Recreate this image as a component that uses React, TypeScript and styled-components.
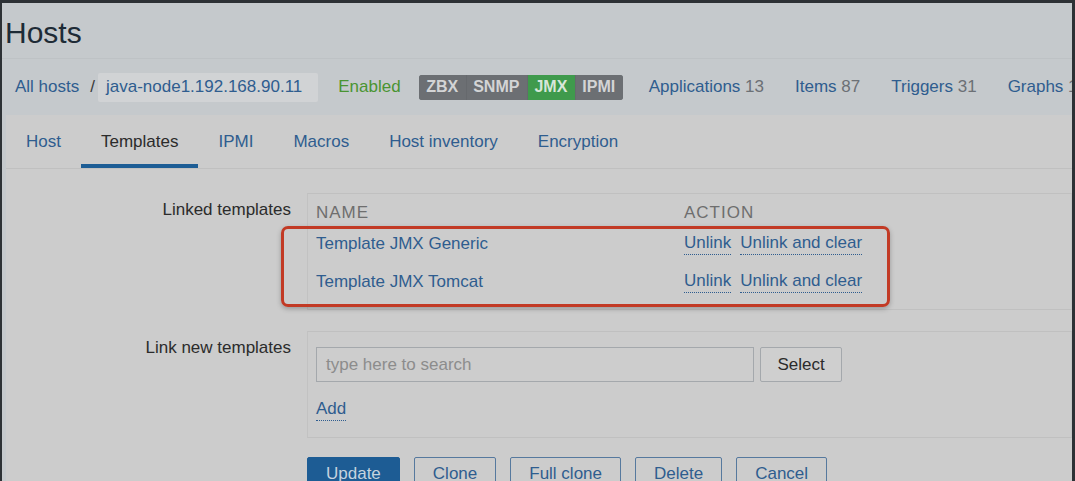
import React from "react";
import styled, { createGlobalStyle } from "styled-components";

const Global = createGlobalStyle`
  html, body { margin: 0; padding: 0; background: #2d3135; }
  body { font-family: "Liberation Sans", Arial, sans-serif; }
  * { box-sizing: border-box; }
`;

const Frame = styled.div`
  width: 1075px;
  height: 481px;
  overflow: hidden;
  background: #2d3135;
  padding: 3px 3px 0 2px;
`;

const Screen = styled.div`
  height: 100%;
  background: #c5c9cc;
  display: flex;
  flex-direction: column;
  color: #2b2b2b;
  font-size: 17px;
  overflow: hidden;
`;

const TitleBar = styled.div`
  height: 56px;
  flex: none;
  border-bottom: 1px solid #bec2c5;
  display: flex;
  align-items: center;
  padding-left: 3px;
`;

const Title = styled.h1`
  margin: 0;
  font-size: 30px;
  font-weight: 400;
  color: #1e2b36;
  line-height: 1;
  margin-top: 4px;
`;

const NavBar = styled.div`
  height: 56px;
  flex: none;
  display: flex;
  align-items: center;
  padding-left: 13px;
  white-space: nowrap;
  & > * { flex-shrink: 0; }
`;

const Link = styled.a`
  color: #2f5d8f;
  text-decoration: none;
`;

const Sep = styled.span`
  color: #3a3a3a;
  margin: 0 3px 0 11px;
`;

const HostBox = styled.span`
  background: #d1d3d5;
  height: 29px;
  display: inline-flex;
  align-items: center;
  padding: 0 16px 0 8px;
  border-radius: 2px;
  color: #2f5d8f;
`;

const Status = styled.span`
  color: #4a9432;
  margin-left: 20px;
`;

const Badges = styled.span`
  display: inline-flex;
  height: 25px;
  margin-left: 18px;
  border-radius: 3px;
  overflow: hidden;
  background: #6c6f73;
`;

const Badge = styled.span<{ $on?: boolean }>`
  display: inline-flex;
  align-items: center;
  padding: 0 7.5px;
  font-size: 16px;
  font-weight: 700;
  background: ${(p) => (p.$on ? "#3f9a4c" : "#6c6f73")};
  color: ${(p) => (p.$on ? "#d7e6d9" : "#d3d4d5")};
  & + & { box-shadow: inset 1px 0 0 #66696d; }
`;

const NavLinks = styled.span`
  display: inline-flex;
  gap: 31px;
  margin-left: 26px;
`;

const Count = styled.span`
  color: #6c7075;
`;

const Main = styled.div`
  flex: 1;
  margin-left: 4px;
  background: #cccccc;
  display: flex;
  flex-direction: column;
`;

const Tabs = styled.div`
  height: 54px;
  flex: none;
  display: flex;
  border-bottom: 1px solid #c0c0c0;
`;

const Tab = styled.div<{ $active?: boolean }>`
  padding: 4px 20px 0;
  display: flex;
  align-items: center;
  color: ${(p) => (p.$active ? "#2b2b2b" : "#2f5d8f")};
  border-bottom: 4px solid ${(p) => (p.$active ? "#1d5d95" : "transparent")};
`;

const Form = styled.div`
  padding-top: 24px;
  display: flex;
  flex-direction: column;
`;

const FormRow = styled.div<{ $gap?: number }>`
  display: grid;
  grid-template-columns: 285px 1fr;
  column-gap: 16px;
  margin-top: ${(p) => p.$gap ?? 0}px;
`;

const Label = styled.div`
  text-align: right;
  padding-top: 7px;
  line-height: 20px;
  color: #2b2b2b;
`;

const FieldBox = styled.div`
  position: relative;
  border: 1px solid #c0c0c0;
  border-right-color: #c4c4c4;
  border-left-color: #c2c2c2;
`;

const TableHead = styled.div`
  height: 31px;
  display: grid;
  grid-template-columns: 368px 1fr;
  align-items: end;
  padding: 0 0 2px 8px;
  color: #6e6e6e;
  letter-spacing: 1px;
  line-height: 20px;
`;

const TableRow = styled.div`
  height: 38px;
  display: grid;
  grid-template-columns: 368px 1fr;
  align-items: center;
  padding-left: 8px;
  line-height: 20px;
`;

const Actions = styled.div`
  display: flex;
  gap: 9px;
`;

const DotLink = styled.a`
  color: #2f5d8f;
  text-decoration: none;
  border-bottom: 1px dotted #2f5d8f;
  padding-bottom: 1px;
  line-height: 20px;
`;

const TableEnd = styled.div`
  height: 8px;
`;

const Highlight = styled.div`
  position: absolute;
  left: -27px;
  top: 32px;
  width: 609px;
  height: 81px;
  border: 3px solid #c23a25;
  border-radius: 7px;
  box-shadow: 0 2px 5px rgba(0, 0, 0, 0.25);
  pointer-events: none;
`;

const SearchBox = styled.div`
  padding: 15px 0 16px 8px;
  display: flex;
  flex-direction: column;
  gap: 17px;
`;

const SearchLine = styled.div`
  display: flex;
  gap: 6px;
`;

const Input = styled.div`
  width: 438px;
  height: 35px;
  border: 1px solid #a4a8ac;
  display: flex;
  align-items: center;
  padding-left: 9px;
  color: #8c8c8c;
  background: #cdcdcd;
`;

const SelectBtn = styled.div`
  width: 82px;
  height: 35px;
  border: 1px solid #a4a8ac;
  border-radius: 2px;
  background: #cfcfcf;
  display: flex;
  align-items: center;
  justify-content: center;
  color: #2b2b2b;
`;

const AddLine = styled.div`
  display: flex;
`;

const Buttons = styled.div`
  display: flex;
  gap: 14px;
  margin: 19px 0 0 301px;
`;

const Button = styled.div<{ $primary?: boolean }>`
  height: 34px;
  padding: 0 18px;
  display: flex;
  align-items: center;
  border-radius: 2px;
  border: 1px solid ${(p) => (p.$primary ? "#1d5c94" : "#56799e")};
  background: ${(p) => (p.$primary ? "#1d5c94" : "transparent")};
  color: ${(p) => (p.$primary ? "#c6d3df" : "#2f5d8f")};
`;

const templates = ["Template JMX Generic", "Template JMX Tomcat"];
const tabs = ["Host", "Templates", "IPMI", "Macros", "Host inventory", "Encryption"];

export default function App() {
  return (
    <>
      <Global />
      <Frame>
        <Screen>
          <TitleBar>
            <Title>Hosts</Title>
          </TitleBar>
          <NavBar>
            <Link>All hosts</Link>
            <Sep>/</Sep>
            <HostBox>java-node1.192.168.90.11</HostBox>
            <Status>Enabled</Status>
            <Badges>
              <Badge>ZBX</Badge>
              <Badge>SNMP</Badge>
              <Badge $on>JMX</Badge>
              <Badge>IPMI</Badge>
            </Badges>
            <NavLinks>
              <span><Link>Applications</Link> <Count>13</Count></span>
              <span><Link>Items</Link> <Count>87</Count></span>
              <span><Link>Triggers</Link> <Count>31</Count></span>
              <span><Link>Graphs</Link> <Count>10</Count></span>
            </NavLinks>
          </NavBar>
          <Main>
            <Tabs>
              {tabs.map((t) => (
                <Tab key={t} $active={t === "Templates"}>{t}</Tab>
              ))}
            </Tabs>
            <Form>
              <FormRow>
                <Label>Linked templates</Label>
                <FieldBox>
                  <TableHead>
                    <span>NAME</span>
                    <span>ACTION</span>
                  </TableHead>
                  {templates.map((t) => (
                    <TableRow key={t}>
                      <Link>{t}</Link>
                      <Actions>
                        <DotLink>Unlink</DotLink>
                        <DotLink>Unlink and clear</DotLink>
                      </Actions>
                    </TableRow>
                  ))}
                  <TableEnd />
                  <Highlight />
                </FieldBox>
              </FormRow>
              <FormRow $gap={21}>
                <Label>Link new templates</Label>
                <FieldBox>
                  <SearchBox>
                    <SearchLine>
                      <Input>type here to search</Input>
                      <SelectBtn>Select</SelectBtn>
                    </SearchLine>
                    <AddLine>
                      <DotLink>Add</DotLink>
                    </AddLine>
                  </SearchBox>
                </FieldBox>
              </FormRow>
              <Buttons>
                <Button $primary>Update</Button>
                <Button>Clone</Button>
                <Button>Full clone</Button>
                <Button>Delete</Button>
                <Button>Cancel</Button>
              </Buttons>
            </Form>
          </Main>
        </Screen>
      </Frame>
    </>
  );
}
